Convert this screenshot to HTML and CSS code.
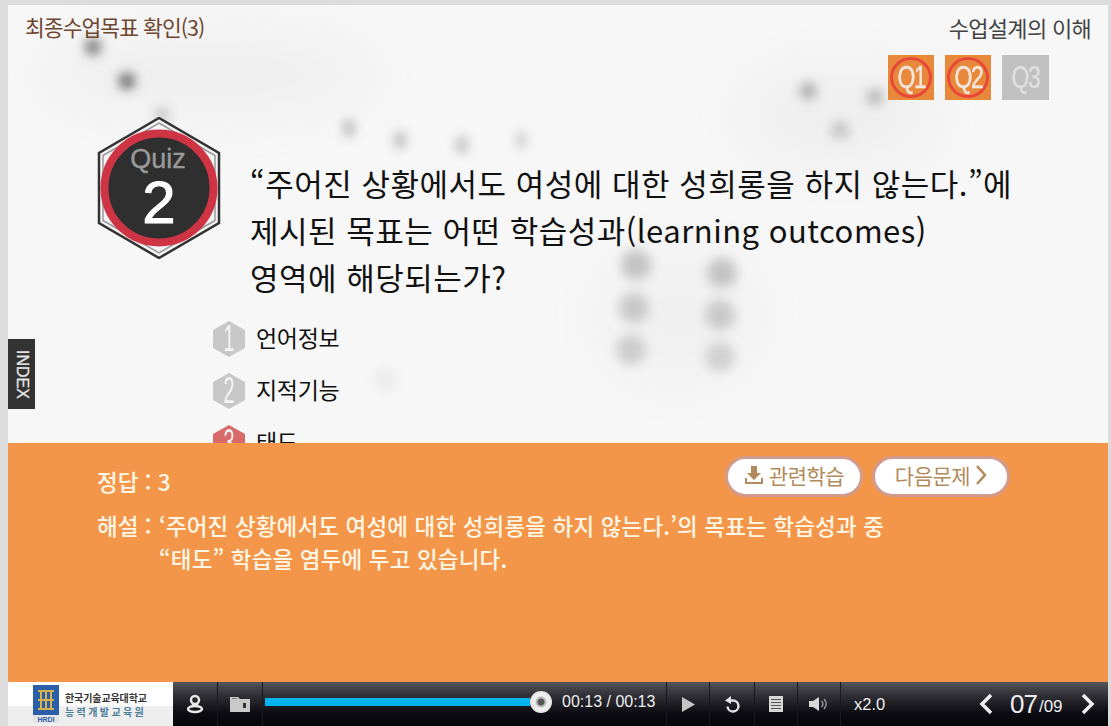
FILE: index.html
```html
<!DOCTYPE html>
<html lang="ko">

<head>
    <meta charset="UTF-8">
    <meta name="viewport" content="width=device-width, initial-scale=1.0">
    <title>최종수업목표 확인(3)</title>
    <link rel="stylesheet" href="styles.css">
</head>

<body>
    <div class="player">
        <main class="slide">
            <svg class="slide-bg" width="1100" height="438" viewBox="0 0 1100 438" aria-hidden="true">
                <defs>
                    <filter id="soft" x="-200%" y="-200%" width="500%" height="500%">
                        <feGaussianBlur stdDeviation="6"></feGaussianBlur>
                    </filter>
                    <filter id="softer" x="-50%" y="-100%" width="200%" height="300%">
                        <feGaussianBlur stdDeviation="30"></feGaussianBlur>
                    </filter>
                </defs>
                <g filter="url(#softer)">
                    <ellipse cx="200" cy="70" rx="170" ry="35" fill="#ededed"></ellipse>
                    <ellipse cx="830" cy="110" rx="100" ry="50" fill="#eeeeee"></ellipse>
                    <ellipse cx="670" cy="310" rx="80" ry="70" fill="#f0f0f0"></ellipse>
                </g>
                <g filter="url(#soft)">
                    <circle cx="85" cy="42" r="8" fill="#6e6e6e"></circle>
                    <circle cx="119" cy="76" r="8" fill="#5e5e5e"></circle>
                    <circle cx="154" cy="110" r="7" fill="#bcbcbc"></circle>
                    <ellipse cx="341" cy="123" rx="5" ry="9" fill="#a8a8a8"></ellipse>
                    <ellipse cx="392" cy="135" rx="6" ry="9" fill="#b4b4b4"></ellipse>
                    <ellipse cx="454" cy="140" rx="6" ry="9" fill="#b8b8b8"></ellipse>
                    <ellipse cx="513" cy="135" rx="5" ry="9" fill="#c4c4c4"></ellipse>
                    <circle cx="628" cy="260" r="15" fill="#c2c2c2"></circle>
                    <circle cx="714" cy="268" r="15" fill="#c2c2c2"></circle>
                    <circle cx="626" cy="303" r="15" fill="#c8c8c8"></circle>
                    <circle cx="712" cy="310" r="15" fill="#c8c8c8"></circle>
                    <circle cx="623" cy="345" r="15" fill="#cccccc"></circle>
                    <circle cx="712" cy="352" r="15" fill="#d0d0d0"></circle>
                    <circle cx="800" cy="86" r="8" fill="#a0a0a0"></circle>
                    <circle cx="867" cy="92" r="8" fill="#b0b0b0"></circle>
                    <circle cx="832" cy="125" r="9" fill="#c0c0c0"></circle>
                    <circle cx="377" cy="375" r="12" fill="#ebebeb"></circle>
                </g>
            </svg>

            <header class="slide-head">
                <h1 class="chapter">최종수업목표 확인(3)</h1>
                <div class="head-right">
                    <p class="course">수업설계의 이해</p>
                    <div class="q-tabs">
                        <span class="q-tab done"><span class="q-label">Q1</span></span>
                        <span class="q-tab done"><span class="q-label">Q2</span></span>
                        <span class="q-tab"><span class="q-label">Q3</span></span>
                    </div>
                </div>
            </header>

            <section class="quiz">
                <div class="quiz-badge">
                    <svg width="124" height="142" viewBox="0 0 124 142" aria-hidden="true">
                        <polygon points="62,1 122,36 122,106 62,141 2,106 2,36" fill="#f4f4f4" stroke="#333" stroke-width="2.5"></polygon>
                        <polygon points="62,6 118,38.500 118,103.500 62,136 6,103.500 6,38.500" fill="none" stroke="#999" stroke-width="1.500"></polygon>
                        <circle cx="62" cy="71" r="54.500" fill="#2f2f2f" stroke="#cf3444" stroke-width="8"></circle>
                        <text class="badge-quiz" x="61" y="51" text-anchor="middle">Quiz</text>
                        <text class="badge-num" x="62" y="106" text-anchor="middle">2</text>
                    </svg>
                </div>
                <div class="quiz-body">
                    <p class="question">“주어진 상황에서도 여성에 대한 성희롱을 하지 않는다.”에<br>제시된 목표는 어떤 학습성과(learning outcomes)<br>영역에 해당되는가?</p>
                </div>
            </section>

            <ol class="choices">
                <li class="choice">
                    <span class="hex"><span class="hex-num">1</span></span>
                    <span class="choice-label">언어정보</span>
                </li>
                <li class="choice">
                    <span class="hex"><span class="hex-num">2</span></span>
                    <span class="choice-label">지적기능</span>
                </li>
                <li class="choice">
                    <span class="hex correct"><span class="hex-num">3</span></span>
                    <span class="choice-label">태도</span>
                </li>
            </ol>

            <button class="index-tab" type="button">INDEX</button>

            <section class="answer">
                <div class="answer-top">
                    <p class="answer-line">정답 : 3</p>
                    <div class="answer-btns">
                        <button class="pill" type="button">
                            <svg width="20" height="20" viewBox="0 0 20 20" aria-hidden="true">
                                <path d="M7 1h6v7h4l-7 7-7-7h4z" fill="#b38a5c"></path>
                                <path d="M1 13v6h18v-6h-2v4H3v-4z" fill="#b38a5c"></path>
                            </svg>
                            관련학습
                        </button>
                        <button class="pill" type="button">
                            다음문제
                            <svg width="12" height="22" viewBox="0 0 12 22" aria-hidden="true">
                                <path d="M2 2l8 9-8 9" fill="none" stroke="#b38a5c" stroke-width="2.500"></path>
                            </svg>
                        </button>
                    </div>
                </div>
                <div class="explain">
                    <span class="explain-label">해설 :</span>
                    <p class="explain-text">‘주어진 상황에서도 여성에 대한 성희롱을 하지 않는다.’의 목표는 학습성과 중<br>“태도” 학습을 염두에 두고 있습니다.</p>
                </div>
            </section>
        </main>

        <footer class="bar">
            <div class="logo">
                <svg width="26" height="38" viewBox="0 0 26 38" aria-hidden="true">
                    <rect width="26" height="30" fill="#2b5ea8"></rect>
                    <rect y="30" width="26" height="8" fill="#e4e4e4"></rect>
                    <path d="M5 6h16M5 24h16M8 6v18M13 6v18M18 6v18M5 15h16" stroke="#d8b24a" stroke-width="2" fill="none"></path>
                    <text class="logo-mark" x="13" y="37" text-anchor="middle">HRDI</text>
                </svg>
                <div class="logo-text">
                    <span>한국기술교육대학교</span>
                    <span class="logo-sub">능력개발교육원</span>
                </div>
            </div>
            <div class="cell">
                <svg width="18" height="20" viewBox="0 0 18 20" aria-hidden="true">
                    <circle cx="9" cy="6" r="4" fill="none" stroke="#e8e8e8" stroke-width="2.500"></circle>
                    <path d="M7 10l-1 3M11 10l1 3" stroke="#e8e8e8" stroke-width="2"></path>
                    <ellipse cx="9" cy="15" rx="7" ry="3" fill="none" stroke="#e8e8e8" stroke-width="2.500"></ellipse>
                </svg>
            </div>
            <div class="cell">
                <svg width="20" height="16" viewBox="0 0 20 16" aria-hidden="true">
                    <path d="M0 1h8l2 2h10v13H0z" fill="#c9c9c9"></path>
                    <rect x="13" y="7" width="3" height="5" fill="#333"></rect>
                    <rect x="2" y="2" width="5" height="1" fill="#777"></rect>
                </svg>
            </div>
            <div class="progress-wrap">
                <div class="progress">
                    <div class="progress-fill"></div>
                    <span class="disc"></span>
                </div>
                <span class="time">00:13 / 00:13</span>
            </div>
            <div class="cell narrow">
                <svg width="14" height="15" viewBox="0 0 14 15" aria-hidden="true">
                    <path d="M1 0l13 7.500L1 15z" fill="#c4c4c4"></path>
                </svg>
            </div>
            <div class="cell">
                <svg width="16" height="17" viewBox="0 0 16 17" aria-hidden="true">
                    <path d="M4.500 4.500H9a5.500 5.500 0 1 1-5.500 6" fill="none" stroke="#e4e4e4" stroke-width="2.500"></path>
                    <path d="M7 0v8L1 4.500z" fill="#e4e4e4"></path>
                </svg>
            </div>
            <div class="cell narrow">
                <svg width="14" height="16" viewBox="0 0 14 16" aria-hidden="true">
                    <rect width="14" height="16" fill="#d8d8d8"></rect>
                    <path d="M2 3.500h10M2 6.500h10M2 9.500h10M2 12.500h10" stroke="#555" stroke-width="1.200"></path>
                </svg>
            </div>
            <div class="cell narrow">
                <svg width="20" height="14" viewBox="0 0 20 14" aria-hidden="true">
                    <path d="M0 4h4l6-4v14l-6-4H0z" fill="#d8d8d8"></path>
                    <path d="M12.500 4a4 4 0 0 1 0 6M15 2a7 7 0 0 1 0 10" fill="none" stroke="#999" stroke-width="1.500"></path>
                </svg>
            </div>
            <span class="speed">x2.0</span>
            <div class="pager">
                <svg width="14" height="22" viewBox="0 0 14 22" aria-hidden="true">
                    <path d="M12 2L3 11l9 9" fill="none" stroke="#eee" stroke-width="3.500"></path>
                </svg>
                <span class="page-now">07</span><span class="page-total">/09</span>
                <svg class="page-next" width="14" height="22" viewBox="0 0 14 22" aria-hidden="true">
                    <path d="M2 2l9 9-9 9" fill="none" stroke="#eee" stroke-width="3.500"></path>
                </svg>
            </div>
        </footer>
    </div>
</body>

</html>
```

FILE: styles.css
```css
* {
    box-sizing: border-box;
}

html,
body {
    margin: 0;
    padding: 0;
    height: 100%;
    overflow: hidden;
}

body {
    background-color: #dcdcdc;
    font-family: "Noto Sans CJK KR", "Noto Sans", sans-serif;
    color: #111;
}

p,
h1,
ol {
    margin: 0;
    padding: 0;
}

.player {
    display: flex;
    flex-direction: column;
    width: 1100px;
    height: 726px;
    margin-left: 8px;
    padding-top: 5px;
}

.slide {
    position: relative;
    display: flex;
    flex-direction: column;
    flex: 1;
    min-height: 0;
    overflow: hidden;
    background-color: #f7f7f7;
}

.slide-bg {
    position: absolute;
    top: 0;
    left: 0;
}

/* head */
.slide-head {
    position: relative;
    display: flex;
    justify-content: space-between;
    padding: 8px 17px 0;
    height: 112px;
}

.chapter {
    font-size: 21.500px;
    font-weight: 400;
    letter-spacing: -0.95px;
    line-height: 28px;
    color: #6e4630;
}

.head-right {
    display: flex;
    flex-direction: column;
    align-items: flex-end;
}

.course {
    font-size: 22px;
    letter-spacing: -0.7px;
    line-height: 28px;
    color: #444;
}

.q-tabs {
    display: flex;
    gap: 11px;
    margin-top: 14px;
    margin-right: 42px;
}

.q-tab {
    position: relative;
    display: flex;
    justify-content: center;
    align-items: center;
    width: 46px;
    height: 45px;
    background-color: #c0c0c0;
    color: #dedede;
    font-family: "Liberation Sans", sans-serif;
    font-size: 32px;
    -webkit-text-stroke: 0.5px currentColor;
}

.q-tab:last-child {
    width: 47px;
}

.q-label {
    display: inline-block;
    letter-spacing: -2px;
    transform: scaleX(0.72);
}

.q-tab.done {
    background-color: #e8883a;
    color: #f2e6dc;
}

.q-tab.done::before {
    content: "";
    position: absolute;
    top: 2px;
    left: 2px;
    box-sizing: border-box;
    width: 42px;
    height: 41px;
    border: 3px solid #e8483a;
    border-radius: 50%;
}

/* quiz */
.quiz {
    position: relative;
    display: flex;
    height: 204px;
}

.quiz-badge {
    margin-left: 89px;
    width: 124px;
    height: 142px;
}

.quiz-badge svg {
    display: block;
}

.badge-quiz {
    font-family: "Liberation Sans", sans-serif;
    font-size: 27px;
    fill: #9a9a9a;
    stroke: #9a9a9a;
    stroke-width: 0.4px;
}

.badge-num {
    font-family: "Liberation Sans", sans-serif;
    font-size: 60px;
    fill: #fff;
    stroke: #fff;
    stroke-width: 1px;
}

.quiz-body {
    margin-left: 29px;
    padding-top: 42px;
}

.question {
    font-size: 31px;
    line-height: 47px;
    letter-spacing: 0.5px;
    color: #111;
    white-space: nowrap;
}

/* choices */
.choices {
    position: relative;
    display: flex;
    flex-direction: column;
    gap: 16px;
    padding-left: 205px;
    list-style: none;
    height: 122px;
}

.choice {
    display: flex;
    align-items: center;
    gap: 11px;
    height: 36px;
    flex-shrink: 0;
    font-size: 23px;
    letter-spacing: -0.3px;
    color: #111;
}

.choice-label {
    padding-bottom: 4px;
}

.hex {
    display: flex;
    justify-content: center;
    align-items: center;
    width: 32px;
    height: 36px;
    background-color: #c8c8c8;
    color: #f4f4f4;
    font-family: "Liberation Sans", sans-serif;
    font-size: 36px;
    clip-path: polygon(50% 0, 100% 25%, 100% 75%, 50% 100%, 0 75%, 0 25%);
}

.hex-num {
    display: inline-block;
    line-height: 36px;
    transform: scaleX(0.55);
}

.hex.correct {
    background-color: #d96a6a;
}

.index-tab {
    position: absolute;
    top: 334px;
    left: 0;
    width: 27px;
    height: 70px;
    padding: 0;
    border: none;
    background-color: #333;
    color: #e6e6e6;
    font-family: "Liberation Sans", sans-serif;
    font-size: 16px;
    -webkit-text-stroke: 0.3px #e6e6e6;
    writing-mode: vertical-rl;
    text-align: center;
}

/* answer */
.answer {
    position: relative;
    flex: 1;
    padding: 13px 98px 0 89px;
    background-color: #f49649;
    color: #fff6e6;
    font-weight: 500;
}

.answer-top {
    display: flex;
    justify-content: space-between;
    align-items: center;
    height: 41px;
}

.answer-line {
    font-size: 22.500px;
    padding-top: 9px;
}

.answer-btns {
    display: flex;
    gap: 9px;
}

.pill {
    display: flex;
    justify-content: center;
    align-items: center;
    gap: 5px;
    width: 138px;
    height: 41px;
    padding: 0 0 3px;
    border: 3px solid #d39a8e;
    border-radius: 21px;
    background-color: #fff;
    color: #b38a5c;
    font-family: "Noto Sans CJK KR", sans-serif;
    font-size: 21px;
    letter-spacing: -0.5px;
}

.explain {
    display: flex;
    margin-top: 12px;
    font-size: 22.500px;
    line-height: 33px;
}

.explain-label {
    width: 62px;
    flex-shrink: 0;
    white-space: nowrap;
}

.explain-text {
    white-space: nowrap;
    letter-spacing: 0.15px;
}

/* bottom bar */
.bar {
    display: flex;
    align-items: stretch;
    flex-shrink: 0;
    height: 44px;
    background: linear-gradient(#55555c 0, #303036 30%, #0c0c12 70%, #050508 100%);
    color: #eee;
    font-family: "Liberation Sans", sans-serif;
}

.logo {
    display: flex;
    align-items: center;
    gap: 6px;
    width: 165px;
    padding-left: 25px;
    background: linear-gradient(#ffffff 55%, #eeeeee 55%);
}

.logo-mark {
    font-size: 7px;
    fill: #2b5ea8;
    font-weight: 700;
}

.logo-text {
    display: flex;
    flex-direction: column;
    gap: 3px;
    font-family: "Noto Sans CJK KR", sans-serif;
    font-size: 10px;
    font-weight: 700;
    line-height: 11px;
    letter-spacing: -0.1px;
    color: #333;
    white-space: nowrap;
}

.logo-sub {
    color: #4b7f9a;
    letter-spacing: 2.400px;
}

.cell {
    display: flex;
    justify-content: center;
    align-items: center;
    width: 45px;
    border-right: 1px solid #1a1a1e;
}

.cell.narrow {
    width: 43px;
}

.progress-wrap {
    display: flex;
    align-items: center;
    width: 404px;
    padding-left: 2px;
    padding-bottom: 4px;
    border-right: 1px solid #1a1a1e;
}

.progress {
    position: relative;
    width: 287px;
    height: 8px;
}

.progress-fill {
    width: 265px;
    height: 8px;
    background-color: #00b4f0;
}

.disc {
    position: absolute;
    top: -7px;
    left: 265px;
    width: 22px;
    height: 22px;
    border-radius: 50%;
    background: radial-gradient(circle, #555 0 3px, #bbb 4px 5px, #f2f2f2 6px, #d8d8d8 100%);
}

.time {
    margin-left: 10px;
    font-size: 16px;
    white-space: nowrap;
}

.speed {
    display: flex;
    align-items: center;
    margin-left: 13px;
    width: 60px;
    font-size: 16.500px;
}

.pager {
    display: flex;
    align-items: center;
    flex: 1;
    padding-left: 65px;
}

.page-now {
    margin-left: 17px;
    font-size: 26px;
    letter-spacing: -1px;
}

.page-total {
    font-size: 17px;
    padding-top: 6px;
    padding-left: 2px;
}

.page-next {
    margin-left: 18px;
}
```
